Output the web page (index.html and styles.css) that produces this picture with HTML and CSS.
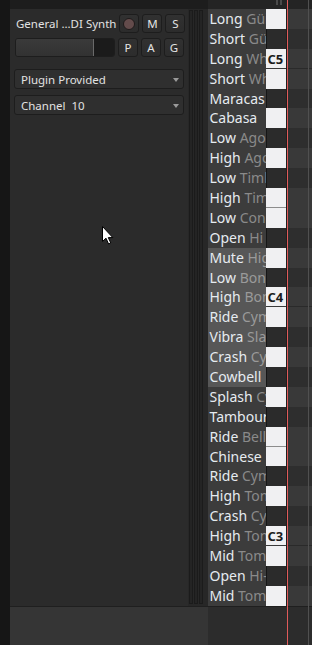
FILE: index.html
```html
<!DOCTYPE html>
<html>
<head>
<meta charset="utf-8">
<link rel="stylesheet" href="styles.css">
</head>
<body>
<div class="app">
  <div class="gutter"></div>
  <div class="main">
    <div class="top-left"></div>
    <div class="top-roll"><span class="grip"></span><span class="grip"></span></div>

    <div class="panel">
      <div class="ctl-row">
        <span class="title">General ...DI Synth</span>
        <span class="btn"><span class="rec"></span></span>
        <span class="btn">M</span>
        <span class="btn">S</span>
      </div>
      <div class="ctl-row">
        <div class="fader"><span class="fader-fill"></span><span class="fader-empty"></span></div>
        <span class="btn">P</span>
        <span class="btn">A</span>
        <span class="btn">G</span>
      </div>
      <div class="select first"><span>Plugin Provided</span><span class="arrow"></span></div>
      <div class="select"><span>Channel&nbsp; 10</span><span class="arrow"></span></div>
    </div>

    <div class="meters"><span class="bar"></span><span class="bar"></span><span class="bar"></span></div>

    <div class="roll">
      <div class="row w"><span class="name"><b>Long</b> Güiro</span><span class="key"></span><span class="sep"></span><span class="lane"></span></div>
      <div class="row k"><span class="name"><b>Short</b> Güiro</span><span class="key"></span><span class="sep"></span><span class="lane"></span></div>
      <div class="row w c"><span class="name"><b>Long</b> Whistle</span><span class="key">C5</span><span class="sep"></span><span class="lane"></span></div>
      <div class="row w"><span class="name"><b>Short</b> Whistle</span><span class="key"></span><span class="sep"></span><span class="lane"></span></div>
      <div class="row k"><span class="name"><b>Maracas</b></span><span class="key"></span><span class="sep"></span><span class="lane"></span></div>
      <div class="row w"><span class="name"><b>Cabasa</b></span><span class="key"></span><span class="sep"></span><span class="lane"></span></div>
      <div class="row k"><span class="name"><b>Low</b> Agogo</span><span class="key"></span><span class="sep"></span><span class="lane"></span></div>
      <div class="row w"><span class="name"><b>High</b> Agogo</span><span class="key"></span><span class="sep"></span><span class="lane"></span></div>
      <div class="row k"><span class="name"><b>Low</b> Timbale</span><span class="key"></span><span class="sep"></span><span class="lane"></span></div>
      <div class="row w f"><span class="name"><b>High</b> Timbale</span><span class="key"></span><span class="sep"></span><span class="lane"></span></div>
      <div class="row w"><span class="name"><b>Low</b> Conga</span><span class="key"></span><span class="sep"></span><span class="lane"></span></div>
      <div class="row k"><span class="name"><b>Open</b> Hi Conga</span><span class="key"></span><span class="sep"></span><span class="lane"></span></div>
      <div class="row w hl"><span class="name"><b>Mute</b> High Conga</span><span class="key"></span><span class="sep"></span><span class="lane"></span></div>
      <div class="row k hl"><span class="name"><b>Low</b> Bongo</span><span class="key"></span><span class="sep"></span><span class="lane"></span></div>
      <div class="row w c hl"><span class="name"><b>High</b> Bongo</span><span class="key">C4</span><span class="sep"></span><span class="lane"></span></div>
      <div class="row w hl"><span class="name"><b>Ride</b> Cymbal 2</span><span class="key"></span><span class="sep"></span><span class="lane"></span></div>
      <div class="row k hl"><span class="name"><b>Vibra</b> Slap</span><span class="key"></span><span class="sep"></span><span class="lane"></span></div>
      <div class="row w hl"><span class="name"><b>Crash</b> Cymbal 2</span><span class="key"></span><span class="sep"></span><span class="lane"></span></div>
      <div class="row k hl"><span class="name"><b>Cowbell</b></span><span class="key"></span><span class="sep"></span><span class="lane"></span></div>
      <div class="row w"><span class="name"><b>Splash</b> Cymbal</span><span class="key"></span><span class="sep"></span><span class="lane"></span></div>
      <div class="row k"><span class="name"><b>Tambourine</b></span><span class="key"></span><span class="sep"></span><span class="lane"></span></div>
      <div class="row w f"><span class="name"><b>Ride</b> Bell</span><span class="key"></span><span class="sep"></span><span class="lane"></span></div>
      <div class="row w"><span class="name"><b>Chinese</b> Cymbal</span><span class="key"></span><span class="sep"></span><span class="lane"></span></div>
      <div class="row k"><span class="name"><b>Ride</b> Cymbal 1</span><span class="key"></span><span class="sep"></span><span class="lane"></span></div>
      <div class="row w"><span class="name"><b>High</b> Tom 1</span><span class="key"></span><span class="sep"></span><span class="lane"></span></div>
      <div class="row k"><span class="name"><b>Crash</b> Cymbal 1</span><span class="key"></span><span class="sep"></span><span class="lane"></span></div>
      <div class="row w c"><span class="name"><b>High</b> Tom 2</span><span class="key">C3</span><span class="sep"></span><span class="lane"></span></div>
      <div class="row w"><span class="name"><b>Mid</b> Tom 1</span><span class="key"></span><span class="sep"></span><span class="lane"></span></div>
      <div class="row k"><span class="name"><b>Open</b> Hi-Hat</span><span class="key"></span><span class="sep"></span><span class="lane"></span></div>
      <div class="row w"><span class="name"><b>Mid</b> Tom 2</span><span class="key"></span><span class="sep"></span><span class="lane"></span></div>
    </div>

    <div class="bottom-left"></div>
    <div class="bottom-roll"></div>

    <div class="barline"></div>
    <div class="playhead"></div>
  </div>

  <svg class="cursor" width="12" height="19" viewBox="0 0 12 19">
    <path d="M0.5 0.5 L0.5 15.5 L4 12.2 L6.6 18 L8.8 17 L6.3 11.6 L10.8 11.6 Z" fill="#ffffff" stroke="#000000" stroke-width="1" stroke-linejoin="miter"/>
  </svg>
</div>
</body>
</html>
```

FILE: styles.css
```css
html, body {
  margin: 0;
  padding: 0;
}
body {
  background: #161616;
  font-family: "Noto Sans", "Open Sans", sans-serif;
  color: #e0e0e0;
  overflow: hidden;
}
.app {
  position: relative;
  display: flex;
  width: 312px;
  height: 645px;
}
.gutter {
  width: 10px;
  background: #161616;
}
.main {
  position: relative;
  flex: 1;
  display: grid;
  grid-template-columns: 178px 20px 104px;
  grid-template-rows: 9px 597px 39px;
}
.top-left {
  grid-column: 1 / 3;
  background: #1d1d1d;
}
.top-roll {
  background: #242424;
  display: flex;
  gap: 1.5px;
  padding-left: 67.5px;
}
.grip {
  width: 2.5px;
  height: 5px;
  background: #4a4a4a;
}

/* ---- instrument panel ---- */
.panel {
  background: #2b2b2b;
  padding: 5px 4px 0 5px;
  display: flex;
  flex-direction: column;
}
.ctl-row {
  display: grid;
  grid-template-columns: 1fr 20px 20px 20px;
  column-gap: 3px;
  height: 19px;
  align-items: center;
}
.ctl-row + .ctl-row {
  margin-top: 5px;
}
.title {
  font-size: 11.5px;
  padding-left: 1px;
  color: #e2e2e2;
  white-space: nowrap;
}
.btn {
  height: 19px;
  box-sizing: border-box;
  border: 1px solid #1d1d1d;
  border-radius: 3px;
  background: linear-gradient(#313131, #2c2c2c);
  display: flex;
  align-items: center;
  justify-content: center;
  font-size: 11.5px;
  color: #e4e4e4;
}
.rec {
  width: 12px;
  height: 12px;
  box-sizing: border-box;
  border-radius: 50%;
  background: #634b4b;
  border: 1px solid #1e1a1a;
}
.fader {
  height: 19px;
  box-sizing: border-box;
  border: 1px solid #1d1d1d;
  border-radius: 3px;
  display: flex;
  overflow: hidden;
}
.fader-fill {
  width: 77px;
  background: linear-gradient(#3a3a3a, #323232);
  border-right: 1px solid #6a6a6a;
}
.fader-empty {
  flex: 1;
  background: #1b1b1b;
}
.select {
  height: 20px;
  box-sizing: border-box;
  margin-left: -1px;
  border: 1px solid #1d1d1d;
  border-radius: 3px;
  background: #2f2f2f;
  display: flex;
  align-items: center;
  justify-content: space-between;
  padding: 0 4px 0 6px;
  font-size: 11.5px;
  color: #e2e2e2;
  margin-top: 6px;
}
.select.first {
  margin-top: 12px;
}
.arrow {
  width: 0;
  height: 0;
  border-left: 3px solid transparent;
  border-right: 3px solid transparent;
  border-top: 4px solid #9a9a9a;
  margin-top: 2px;
}

/* ---- meters ---- */
.meters {
  background: #272727;
  display: flex;
  gap: 1px;
  padding: 1px 0 2px 1px;
}
.bar {
  width: 4px;
  box-sizing: border-box;
  border: 1px solid #1b1b1b;
  background: #242424;
}

/* ---- piano roll ---- */
.roll {
  display: flex;
  flex-direction: column;
}
.row {
  height: 19.9px;
  display: grid;
  grid-template-columns: 58px 20px 2px 24px;
}
.name {
  background: #3c3c3c;
  font-size: 14px;
  line-height: 19.9px;
  padding-left: 1.5px;
  white-space: nowrap;
  overflow: hidden;
  color: #8a8a8a;
}
.name b {
  font-weight: normal;
  color: #e6ebf0;
}
.row.hl .name {
  background: #575757;
  color: #9a9a9a;
}
.key {
  box-sizing: border-box;
  font-size: 13px;
  font-weight: bold;
  color: #1c1c1c;
  line-height: 17.9px;
  padding: 2px 0 0 1.5px;
  white-space: nowrap;
  overflow: hidden;
}
.row.w .key {
  background: #f0f0f2;
}
.row.k .key {
  background: #2b2b2b;
  border-left: 1px solid #161616;
}
.row.c .key,
.row.f .key {
  border-bottom: 1px solid #8c8c8c;
}
.row.c .key {
  border-bottom-color: #3a3a3a;
}
.sep {
  background: #1e1e1e;
}
.lane {
  background: #393939;
}
.row.k .lane {
  background: #2e2e2e;
}
.row.c .lane {
  box-shadow: inset 0 -1px 0 #2a2a2a;
}

.bottom-left {
  grid-column: 1 / 3;
  background: #353535;
  border-top: 1px solid #1f1f1f;
}
.bottom-roll {
  background: #2c2c2c;
  border-top: 1px solid #1f1f1f;
}

/* overlays: bar line and playhead line run across the whole roll */
.barline {
  position: absolute;
  left: 298px;
  top: 0;
  bottom: 0;
  width: 1px;
  background: #505050;
}
.playhead {
  position: absolute;
  left: 277px;
  top: 0;
  bottom: 0;
  width: 1px;
  background: #e05a5a;
}
.cursor {
  position: absolute;
  left: 102px;
  top: 226px;
}
```
